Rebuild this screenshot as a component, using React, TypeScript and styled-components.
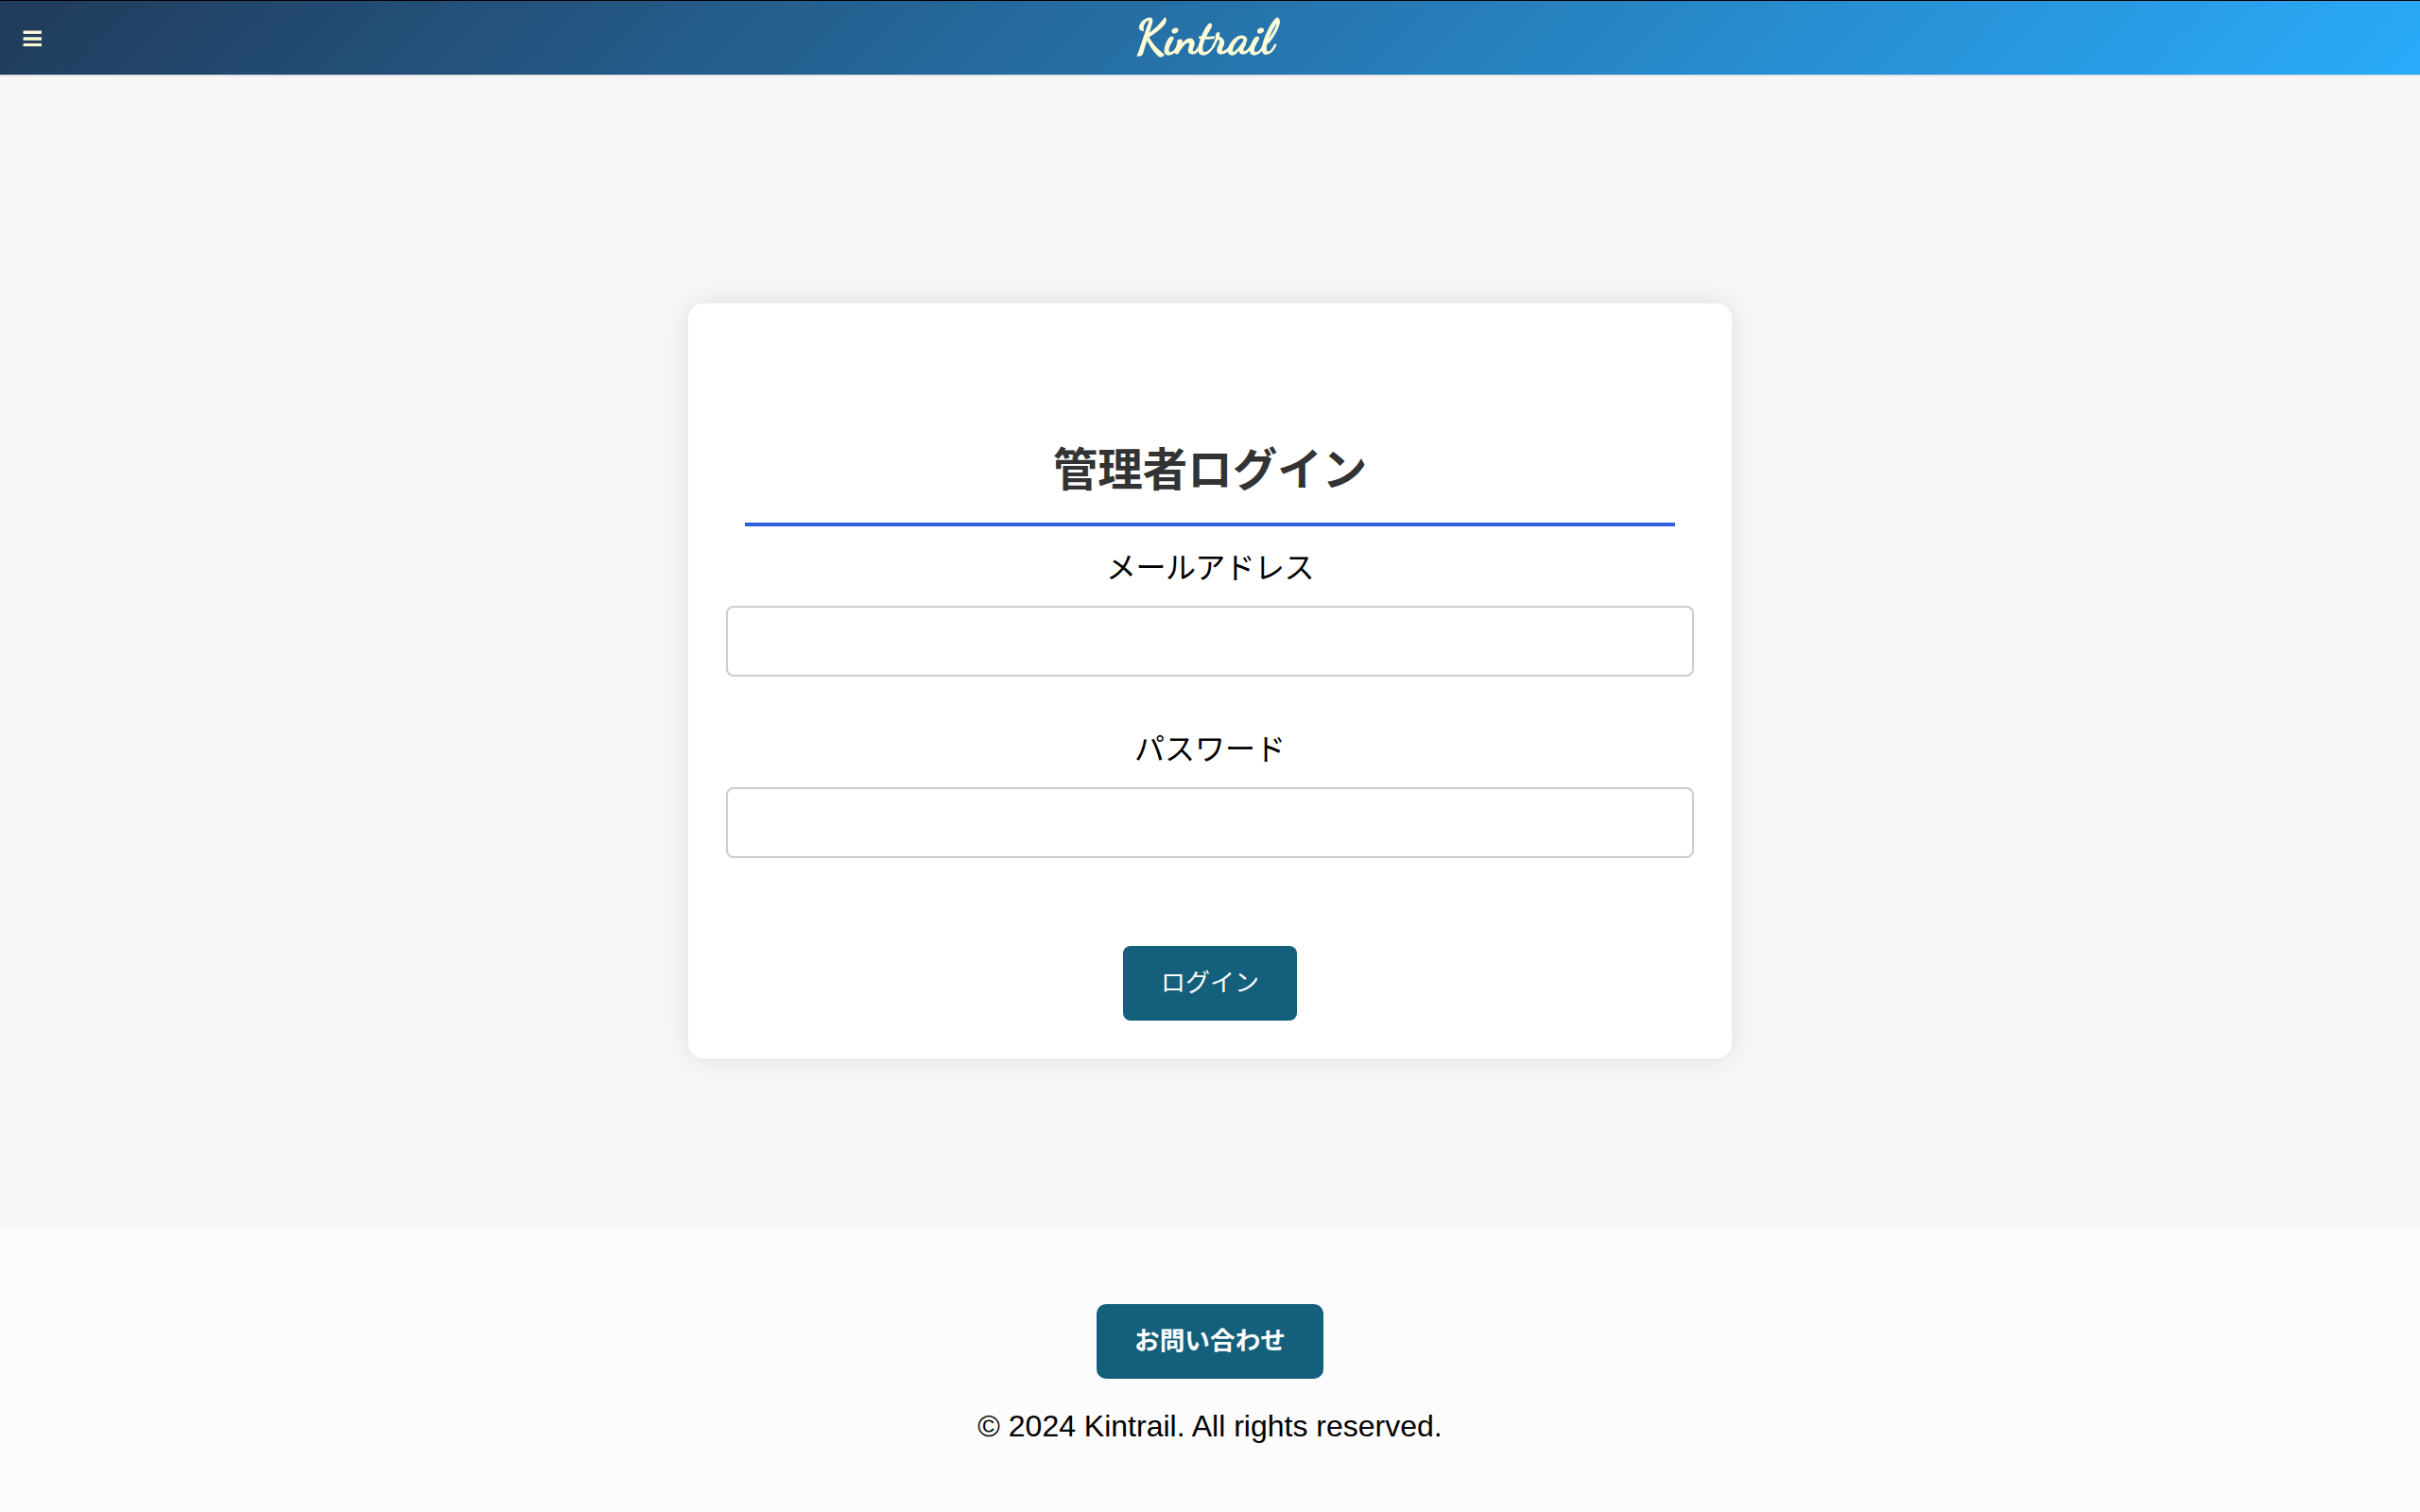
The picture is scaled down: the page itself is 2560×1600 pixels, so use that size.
import React from "react";
import styled, { createGlobalStyle } from "styled-components";

const GlobalStyle = createGlobalStyle`
  * { box-sizing: border-box; }
  body {
    margin: 0;
    background: #fcfcfc;
    color: #000;
    font-family: "Liberation Sans", "Noto Sans CJK JP", sans-serif;
    font-size: 32px;
  }
`;

const Page = styled.div`
  display: flex;
  flex-direction: column;
  height: 1600px;
  overflow: hidden;
  border-top: 1px solid #000;
`;

const Header = styled.header`
  display: grid;
  grid-template-columns: 1fr auto 1fr;
  align-items: center;
  height: 80px;
  flex: none;
  border-bottom: 2px solid #e7e7e7;
  background: linear-gradient(135deg, #213b5b, #2aabfa);
  background-clip: padding-box;
`;

const MenuButton = styled.button`
  display: flex;
  width: 44px;
  height: 78px;
  padding: 31px 0 0 24px;
  border: 0;
  background: none;
`;

const MenuIcon = styled.svg`
  width: 20px;
  height: 18px;
  fill: #fffdd6;
`;

const Logo = styled.div`
  color: #fffdd6;
  font: 700 50px/78px "Dancing Script", cursive;
  white-space: nowrap;
  padding: 0 15.5px 0 4px;
  -webkit-text-stroke: 1px #fffdd6;
`;

const Main = styled.main`
  display: flex;
  justify-content: center;
  align-items: flex-start;
  height: 1219px;
  flex: none;
  padding-top: 240px;
  background: #f8f6f7;
`;

const Card = styled.form`
  display: flex;
  flex-direction: column;
  align-items: center;
  width: 1104px;
  height: 799px;
  padding: 140px 40px 40px;
  border-radius: 16px;
  background: #fff;
  box-shadow: 0 0 30px rgba(0, 0, 0, 0.1);
`;

const Title = styled.h1`
  width: 984px;
  height: 96px;
  margin: 0;
  border-bottom: 4px solid #2b60de;
  color: #333;
  font-size: 47.5px;
  font-weight: 700;
  line-height: 73px;
  text-align: center;
`;

const Field = styled.label<{ $gap: number; $tracking?: number }>`
  display: flex;
  flex-direction: column;
  align-items: center;
  width: 100%;
  margin-top: ${(p) => p.$gap}px;
  line-height: 48px;
  letter-spacing: ${(p) => p.$tracking ?? 0}px;
`;

const Input = styled.input`
  width: 100%;
  height: 75px;
  margin-top: 16px;
  padding: 16px;
  border: 2px solid #ccc;
  border-radius: 8px;
  background: #fff;
  outline: none;
  font: inherit;
`;

const Button = styled.button<{ $width: number; $bold?: boolean }>`
  width: ${(p) => p.$width}px;
  height: 79px;
  flex: none;
  padding: 0;
  border: 0;
  border-radius: ${(p) => (p.$bold ? 10 : 8)}px;
  background: #145f7b;
  color: #fff;
  font-family: inherit;
  font-size: ${(p) => (p.$bold ? 26.67 : 26)}px;
  font-weight: ${(p) => (p.$bold ? 700 : 400)};
  line-height: 79px;
`;

const SubmitRow = styled.div`
  margin-top: auto;
  display: flex;
`;

const Footer = styled.footer`
  display: flex;
  flex-direction: column;
  align-items: center;
  flex: 1;
  padding-top: 80px;
  background: #fcfcfc;
`;

const Copyright = styled.p`
  margin: 32px 0 0;
  line-height: 37px;
`;

export default function App() {
  return (
    <>
      <GlobalStyle />
      <Page>
        <Header>
          <MenuButton aria-label="menu" type="button">
            <MenuIcon viewBox="0 0 20 18">
              <rect x="0.6" y="0.5" width="19.4" height="3.4" />
              <rect x="0.6" y="7.3" width="19.4" height="3.4" />
              <rect x="0.6" y="13.9" width="19.4" height="3.1" />
            </MenuIcon>
          </MenuButton>
          <Logo>Kintrail</Logo>
        </Header>
        <Main>
          <Card>
            <Title>管理者ログイン</Title>
            <Field $gap={20} $tracking={-0.6}>
              メールアドレス
              <Input type="email" />
            </Field>
            <Field $gap={53}>
              パスワード
              <Input type="password" />
            </Field>
            <SubmitRow>
              <Button type="button" $width={184}>ログイン</Button>
            </SubmitRow>
          </Card>
        </Main>
        <Footer>
          <Button type="button" $width={240} $bold>お問い合わせ</Button>
          <Copyright>© 2024 Kintrail. All rights reserved.</Copyright>
        </Footer>
      </Page>
    </>
  );
}
